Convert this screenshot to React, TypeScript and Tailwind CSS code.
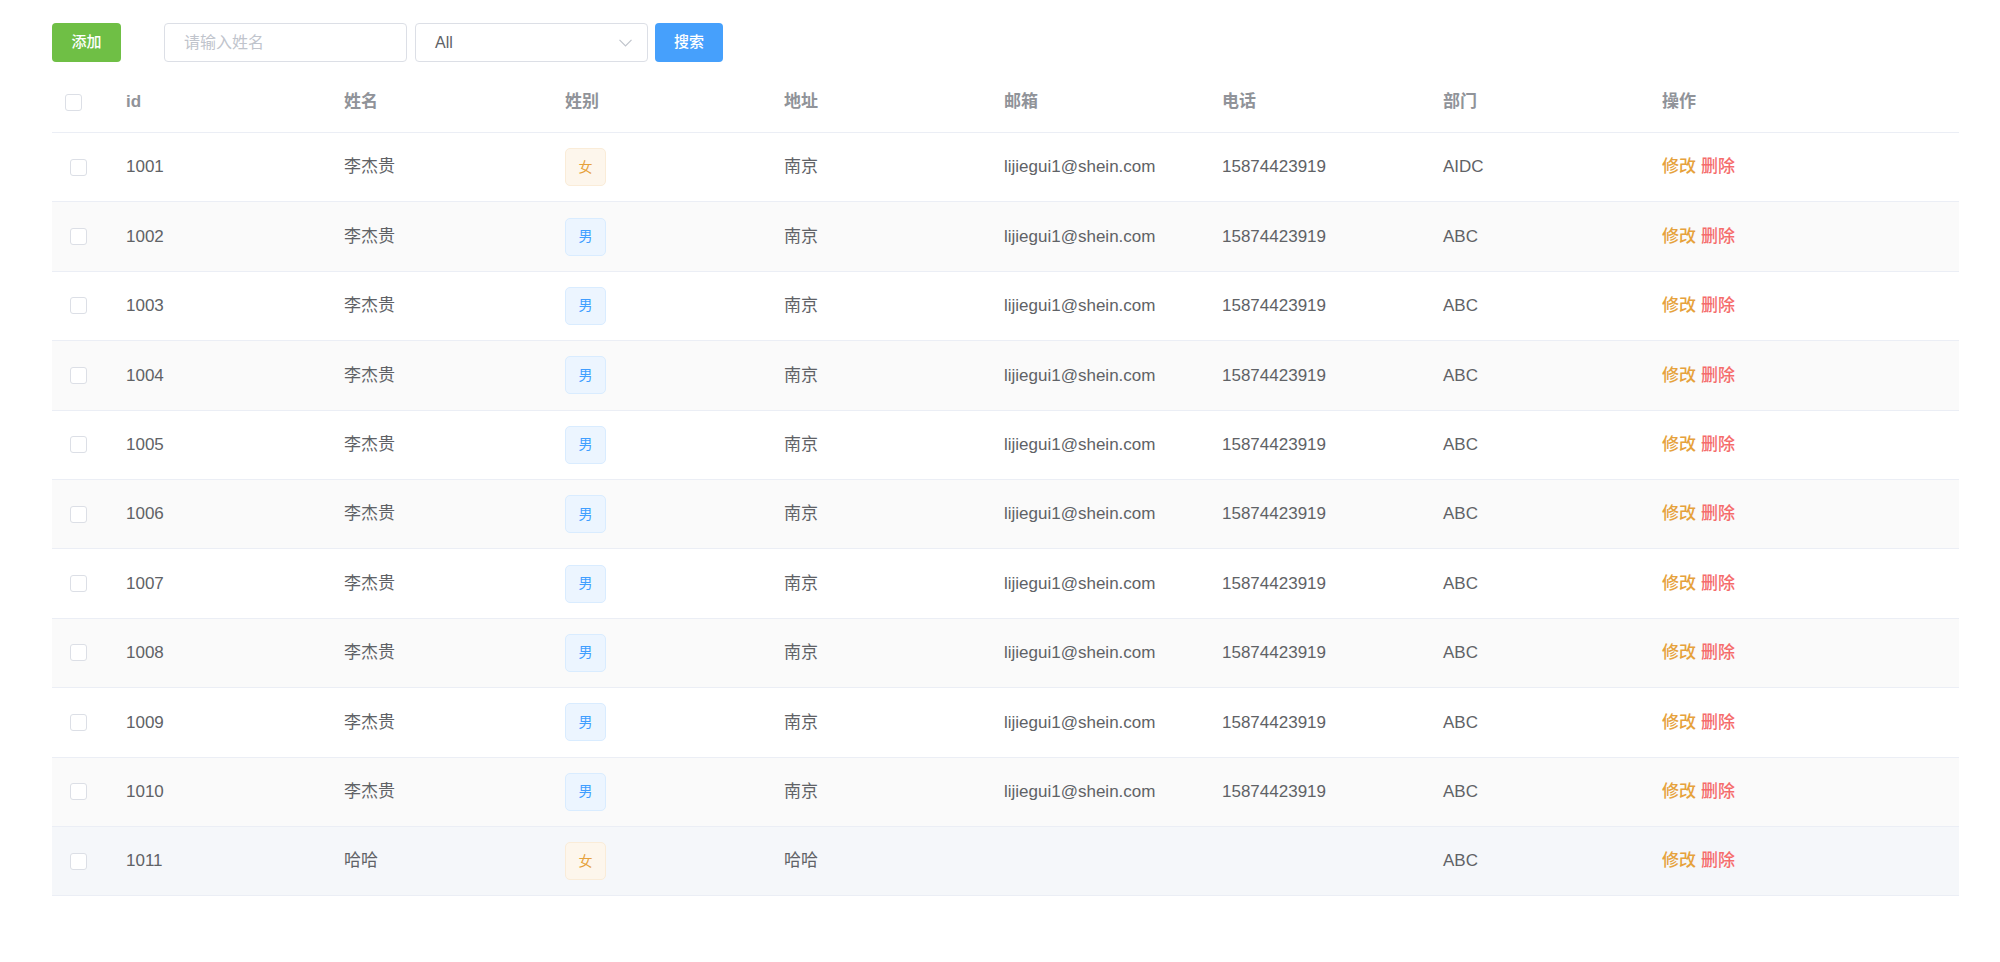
import React, { useState } from 'react';

type Row = {
    id: number;
    name: string;
    gender: '男' | '女';
    addr: string;
    email: string;
    phone: string;
    dept: string;
};

const rows: Row[] = [
    { id: 1001, name: '李杰贵', gender: '女', addr: '南京', email: 'lijiegui1@shein.com', phone: '15874423919', dept: 'AIDC' },
    ...[1002, 1003, 1004, 1005, 1006, 1007, 1008, 1009, 1010].map((id) => ({
        id,
        name: '李杰贵',
        gender: '男' as const,
        addr: '南京',
        email: 'lijiegui1@shein.com',
        phone: '15874423919',
        dept: 'ABC',
    })),
    { id: 1011, name: '哈哈', gender: '女', addr: '哈哈', email: '', phone: '', dept: 'ABC' },
];

const cols = 'grid grid-cols-[74px_218px_221px_219px_220px_218px_221px_219px_1fr]';

const Checkbox = () => (
    <span className="block w-[17px] h-[17px] rounded-[3px] border border-[#dcdfe6] bg-white" />
);

const GenderTag = ({ gender }: { gender: Row['gender'] }) =>
    gender === '男' ? (
        <span className="inline-flex items-center justify-center w-[41px] h-[38px] rounded-[5px] border border-[#d9ecff] bg-[#ecf5ff] text-[#409eff] text-[14px]">
            男
        </span>
    ) : (
        <span className="inline-flex items-center justify-center w-[41px] h-[38px] rounded-[5px] border border-[#faecd8] bg-[#fdf6ec] text-[#e6a23c] text-[14px]">
            女
        </span>
    );

const App = () => {
    const [keyword, setKeyword] = useState('');

    return (
        <div className="min-h-screen w-full bg-white pl-[52px] pr-[41px] pt-[23px] font-['Liberation_Sans','Noto_Sans_CJK_SC',sans-serif]">
            {/* toolbar */}
            <div className="flex items-center h-[39px]">
                <button className="w-[69px] h-[39px] rounded-[4px] bg-[#6fbf45] text-white text-[15px] font-medium">
                    添加
                </button>
                <input
                    className="ml-[43px] w-[243px] h-[39px] rounded-[4px] border border-[#dcdfe6] px-[19px] text-[16px] text-[#606266] placeholder:text-[#c0c4cc] outline-none"
                    placeholder="请输入姓名"
                    value={keyword}
                    onChange={(e) => setKeyword(e.target.value)}
                />
                <div className="ml-[8px] w-[233px] h-[39px] rounded-[4px] border border-[#dcdfe6] pl-[19px] pr-[15px] flex items-center justify-between text-[16px] text-[#606266]">
                    <span>All</span>
                    <svg width="13" height="8" viewBox="0 0 13 8" fill="none">
                        <polyline points="0.5,0.8 6.5,6.8 12.5,0.8" stroke="#c0c4cc" strokeWidth="1.2" />
                    </svg>
                </div>
                <button className="ml-[7px] w-[68px] h-[39px] rounded-[4px] bg-[#46a0fc] text-white text-[15px] font-medium">
                    搜索
                </button>
            </div>

            {/* table */}
            <div className="mt-[10px]">
                <div className={`${cols} h-[61px] items-center border-b border-[#ebeef5] text-[17px] font-semibold text-[#909399]`}>
                    <div className="pl-[13px]">
                        <Checkbox />
                    </div>
                    <div>id</div>
                    <div>姓名</div>
                    <div>姓别</div>
                    <div>地址</div>
                    <div>邮箱</div>
                    <div>电话</div>
                    <div>部门</div>
                    <div>操作</div>
                </div>

                {rows.map((r, i) => {
                    let bg = i % 2 === 1 ? 'bg-[#fafafa]' : 'bg-white';
                    if (r.id === 1011) bg = 'bg-[#f5f7fa]';
                    return (
                        <div
                            key={r.id}
                            className={`${cols} ${bg} h-[69.4px] items-center border-b border-[#ebeef5] text-[17px] text-[#606266]`}
                        >
                            <div className="pl-[18px]">
                                <Checkbox />
                            </div>
                            <div>{r.id}</div>
                            <div>{r.name}</div>
                            <div>
                                <GenderTag gender={r.gender} />
                            </div>
                            <div>{r.addr}</div>
                            <div>{r.email}</div>
                            <div>{r.phone}</div>
                            <div>{r.dept}</div>
                            <div className="flex gap-[5px] font-medium">
                                <span className="text-[#e6a23c] cursor-pointer">修改</span>
                                <span className="text-[#f56c6c] cursor-pointer">删除</span>
                            </div>
                        </div>
                    );
                })}
            </div>
        </div>
    );
};

export default App;
